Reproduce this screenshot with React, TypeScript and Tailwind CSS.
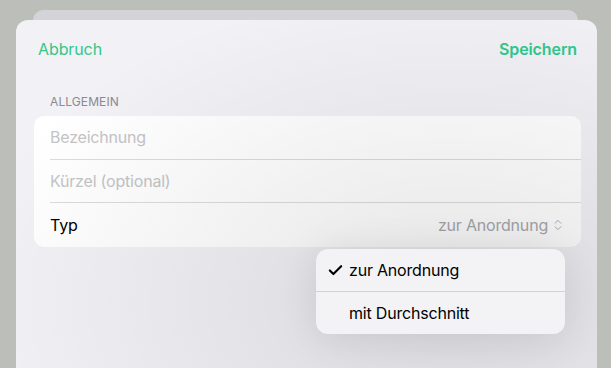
import { Check, ChevronsUpDown } from "lucide-react";

const font = { fontFamily: "Inter, 'Liberation Sans', sans-serif" };

function Row({ children, last }: { children: React.ReactNode; last?: boolean }) {
  return (
    <div className="pl-4">
      <div className={`flex h-[43.5px] items-center pr-4 ${last ? "" : "border-b border-[#dcdcdf]"}`}>{children}</div>
    </div>
  );
}

export default function App() {
  return (
    <div className="h-[368px] w-[611px] overflow-hidden bg-[#bcbeb9] pt-[10px]" style={font}>
      <div className="ml-[33px] mr-[33px] h-[20px] rounded-t-[10px] bg-[#d4d4d8]" />
      <div className="relative -mt-[10px] ml-4 mr-[14px] h-[360px] overflow-hidden rounded-t-[12px] bg-[#f1f1f6]">
        <div className="flex items-center justify-between pl-[22px] pr-[20px] pt-[17px] text-[16px] tracking-[-0.1px]">
          <span className="text-[#33c78a]">Abbruch</span>
          <span className="font-semibold text-[#33c78a]">Speichern</span>
        </div>
        <div className="mt-[32px] px-[34px] text-[12px] tracking-[0.1px] text-[#8a8a8f]">ALLGEMEIN</div>
        <div className="ml-[18px] mr-[16px] mt-[5px] overflow-hidden rounded-[10px] bg-white text-[16px] tracking-[-0.2px]">
          <Row>
            <span className="text-[#c4c4c7]">Bezeichnung</span>
          </Row>
          <Row>
            <span className="text-[#c4c4c7]">Kürzel (optional)</span>
          </Row>
          <Row last>
            <span className="text-black">Typ</span>
            <span className="ml-auto flex items-center gap-[3px] text-[#a9a9ad]">
              zur Anordnung
              <ChevronsUpDown size={14} strokeWidth={1.6} />
            </span>
          </Row>
        </div>
        <div className="pointer-events-none absolute inset-0 bg-[radial-gradient(ellipse_at_75%_78%,rgba(0,0,0,0.10),rgba(0,0,0,0.03)_55%,rgba(0,0,0,0)_80%)]" />
        <div className="absolute left-[300px] top-[229px] w-[249px] overflow-hidden rounded-[12px] bg-[#f3f3f5] text-[16px] tracking-[-0.2px] text-black shadow-[0_4px_40px_rgba(0,0,0,0.10)]">
          <div className="flex h-[43px] items-center border-b border-[#d2d2d6] pl-[11px]">
            <Check size={17} strokeWidth={3} className="mr-[5px]" />
            <span>zur Anordnung</span>
          </div>
          <div className="flex h-[42px] items-center pl-[33px]">
            <span>mit Durchschnitt</span>
          </div>
        </div>
      </div>
    </div>
  );
}
